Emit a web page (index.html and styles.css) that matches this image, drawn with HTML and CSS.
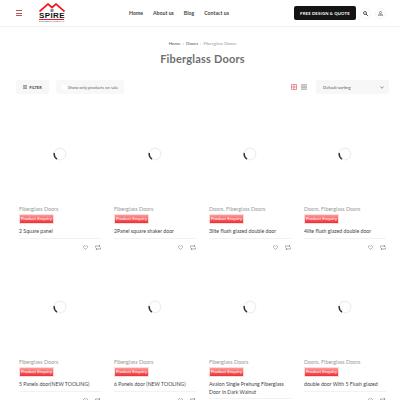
FILE: index.html
```html
<!DOCTYPE html>
<html lang="en">
<head>
    <meta charset="UTF-8">
    <meta name="viewport" content="width=device-width, initial-scale=1.0">
    <title>Fiberglass Doors</title>
    <link rel="stylesheet" href="styles.css">
</head>
<body>

<header class="site-header">
    <div class="menu-toggle"><span></span><span></span><span></span></div>
    <div class="logo">
        <svg class="logo-roof" width="26" height="9" viewBox="0 0 26 9">
            <path d="M0.5 8.5 L9 1 L13 4.5 L17 1 L25.5 8.5" fill="none" stroke="#ee1c25" stroke-width="1.7"/>
            <rect x="11.5" y="6" width="3" height="3" fill="#888"/>
        </svg>
        <div class="logo-name">SPIRE</div>
        <div class="logo-tag">DOOR DESIGN STUDIO INC</div>
    </div>
    <nav class="main-nav">
        <a>Home</a>
        <a>About us</a>
        <a>Blog</a>
        <a>Contact us</a>
    </nav>
    <a class="quote-btn">FREE DESIGN &amp; QUOTE</a>
    <div class="round-icon">
        <svg width="5" height="5" viewBox="0 0 10 10"><circle cx="4" cy="4" r="3" fill="none" stroke="#333" stroke-width="1.6"/><path d="M6.2 6.2 L9.5 9.5" stroke="#333" stroke-width="1.8"/></svg>
    </div>
    <div class="round-icon">
        <svg width="5" height="5" viewBox="0 0 10 10"><circle cx="5" cy="3" r="2.2" fill="none" stroke="#555" stroke-width="1.2"/><path d="M1 9.5 V8 Q1 6.5 3 6.5 H7 Q9 6.5 9 8 V9.5 Z" fill="none" stroke="#555" stroke-width="1.2"/></svg>
    </div>
</header>

<section class="page-title">
    <div class="breadcrumb"><span class="crumb">Home</span><i>›</i><span class="crumb">Doors</span><i>›</i><span>Fiberglass Doors</span></div>
    <h1>Fiberglass Doors</h1>
</section>

<div class="toolbar">
    <a class="filter-btn">
        <svg width="4" height="4" viewBox="0 0 6 6"><path d="M0 1 H6 M0 3 H6 M0 5 H6" stroke="#555" stroke-width="1"/></svg>
        FILTER
    </a>
    <label class="sale-toggle"><span class="check"></span>Show only products on sale</label>
    <div class="views">
        <svg width="6" height="6" viewBox="0 0 6 6"><path d="M0.4 0.4 H5.6 V5.6 H0.4 Z M3 0 V6 M0 3 H6" fill="none" stroke="#d9777f" stroke-width="0.8"/></svg>
        <svg width="6" height="6" viewBox="0 0 6 6"><path d="M0 0.7 H6 M0 2.2 H6 M0 3.8 H6 M0 5.3 H6" stroke="#aaa" stroke-width="1.1"/></svg>
    </div>
    <div class="sorting">Default sorting<svg width="4" height="3" viewBox="0 0 4 3"><path d="M0.3 0.5 L2 2.3 L3.7 0.5" fill="none" stroke="#777" stroke-width="0.8"/></svg></div>
</div>

<main class="products" id="products"></main>

<script>
    const items = [
        ["Fiberglass Doors", "2 Square panel"],
        ["Fiberglass Doors", "2Panel square shaker door"],
        ["Doors, Fiberglass Doors", "3lite flush glazed double door"],
        ["Doors, Fiberglass Doors", "4lite flush glazed double door"],
        ["Fiberglass Doors", "5 Panels door(NEW TOOLING)"],
        ["Fiberglass Doors", "6 Panels door (NEW TOOLING)"],
        ["Fiberglass Doors", "Avalon Single Prehung Fiberglass Door in Dark Walnut"],
        ["Doors, Fiberglass Doors", "double door With 5 Flush glazed"]
    ];

    const grid = document.getElementById("products");
    items.forEach((item) => {
        let card = document.createElement("article");
        card.classList.add("product");
        card.innerHTML = `
            <div class="thumb">
                <svg width="14" height="14" viewBox="0 0 14 14">
                    <circle cx="7" cy="7" r="5.8" fill="none" stroke="#eee" stroke-width="1.2"/>
                    <path d="M1.3 6 A5.8 5.8 0 0 0 4 12" fill="none" stroke="#333" stroke-width="1.5"/>
                </svg>
            </div>
            <div class="cat">${item[0]}</div>
            <a class="enquiry">Product Enquiry</a>
            <div class="name">${item[1]}</div>
            <div class="actions">
                <svg width="5" height="5" viewBox="0 0 10 10"><path d="M5 9 L1 4.8 Q0 2 2.6 1.2 Q4.2 1 5 2.6 Q5.8 1 7.4 1.2 Q10 2 9 4.8 Z" fill="none" stroke="#888" stroke-width="1.2"/></svg>
                <svg width="6" height="5" viewBox="0 0 12 10"><path d="M1 5 V2 H10 M8 0.3 L10.2 2 L8 3.7 M11 5 V8 H2 M4 6.3 L1.8 8 L4 9.7" fill="none" stroke="#777" stroke-width="1.2"/></svg>
            </div>`;
        grid.appendChild(card);
    });
</script>

</body>
</html>
```

FILE: styles.css
```css
* {
    box-sizing: border-box;
}
html, body {
    height: 400px;
}
body {
    font-family: Lato, "Open Sans", sans-serif;
    background-color: #fff;
    color: #333;
    margin: 0;
    padding: 0;
    overflow: hidden;
}

/* header */
.site-header {
    height: 27px;
    border-bottom: 1px solid #f2f2f2;
    display: flex;
    align-items: center;
    padding: 0 14px 0 16px;
}
.menu-toggle {
    width: 6px;
    display: flex;
    flex-direction: column;
    gap: 1.5px;
    margin-right: 17px;
}
.menu-toggle span {
    height: 1px;
    background: #b5545a;
}
.logo {
    width: 25px;
    display: flex;
    flex-direction: column;
    align-items: center;
}
.logo-roof {
    display: block;
}
.logo-name {
    font-family: "Liberation Sans", sans-serif;
    font-size: 8px;
    font-weight: bold;
    line-height: 7px;
    letter-spacing: 0.4px;
    color: #111;
    border-bottom: 1px solid #ee1c25;
    width: 100%;
    text-align: center;
}
.logo-tag {
    font-size: 2px;
    line-height: 3px;
    white-space: nowrap;
    color: #555;
}
.main-nav {
    display: flex;
    gap: 10px;
    font-size: 5.2px;
    font-weight: 700;
    color: #444;
    margin-left: 65px;
}
.quote-btn {
    margin-left: auto;
    width: 62px;
    height: 14px;
    background: #141414;
    color: #fff;
    border-radius: 2px;
    font-size: 4.2px;
    font-weight: 700;
    letter-spacing: 0.2px;
    display: flex;
    align-items: center;
    justify-content: center;
}
.round-icon {
    width: 11px;
    height: 11px;
    border: 1px solid #f4f4f4;
    border-radius: 50%;
    display: flex;
    align-items: center;
    justify-content: center;
    margin-left: 4px;
}

/* page title */
.page-title {
    text-align: center;
    padding: 13px 0 0 5px;
}
.breadcrumb {
    font-size: 4.5px;
    line-height: 8px;
    color: #999;
}
.breadcrumb .crumb {
    color: #555;
}
.breadcrumb i {
    font-style: normal;
    margin: 0 2px;
}
.page-title h1 {
    margin: 3px 0 0;
    font-size: 11px;
    line-height: 16px;
    font-weight: 700;
    color: #6f6f6f;
    letter-spacing: 0.2px;
}

/* toolbar */
.toolbar {
    display: flex;
    align-items: center;
    height: 14px;
    margin-top: 13px;
    padding: 0 11px 0 16px;
}
.filter-btn {
    width: 33px;
    height: 14px;
    background: #f7f7f7;
    border-radius: 2px;
    font-size: 4px;
    font-weight: 700;
    color: #444;
    display: flex;
    align-items: center;
    justify-content: center;
    gap: 2px;
}
.sale-toggle {
    width: 68px;
    height: 14px;
    margin-left: 7px;
    padding-left: 6px;
    background: #f8f8f8;
    border-radius: 2px;
    font-size: 4.2px;
    color: #666;
    display: flex;
    align-items: center;
    gap: 2px;
    white-space: nowrap;
}
.check {
    width: 4px;
    height: 4px;
    background: #fff;
    flex: none;
}
.views {
    margin-left: auto;
    display: flex;
    gap: 4px;
}
.sorting {
    width: 73px;
    height: 14px;
    margin-left: 9px;
    padding: 0 5px 0 7px;
    background: #f7f7f7;
    border-radius: 2px;
    font-size: 4.2px;
    color: #555;
    display: flex;
    align-items: center;
    justify-content: space-between;
}

/* products */
.products {
    display: grid;
    grid-template-columns: repeat(4, 82px);
    grid-auto-rows: 153px;
    column-gap: 13px;
    padding-left: 19px;
    margin-top: 9px;
}
.thumb {
    height: 102px;
    display: flex;
    align-items: center;
    justify-content: center;
}
.cat {
    font-size: 5.4px;
    line-height: 8px;
    color: #999;
}
.enquiry {
    display: block;
    width: 35px;
    height: 10px;
    margin-top: 1px;
    background: linear-gradient(#f99, #ee2f33);
    border: 1px solid #fbdcdc;
    color: #fff;
    font-size: 4.4px;
    line-height: 8px;
    text-align: center;
    white-space: nowrap;
}
.name {
    margin-top: 4px;
    font-size: 5.2px;
    line-height: 7.5px;
    color: #444;
    padding-bottom: 2px;
    border-bottom: 1px solid #f2f2f2;
}
.actions {
    display: flex;
    justify-content: flex-end;
    align-items: center;
    gap: 7px;
    margin-top: 6px;
}
```
